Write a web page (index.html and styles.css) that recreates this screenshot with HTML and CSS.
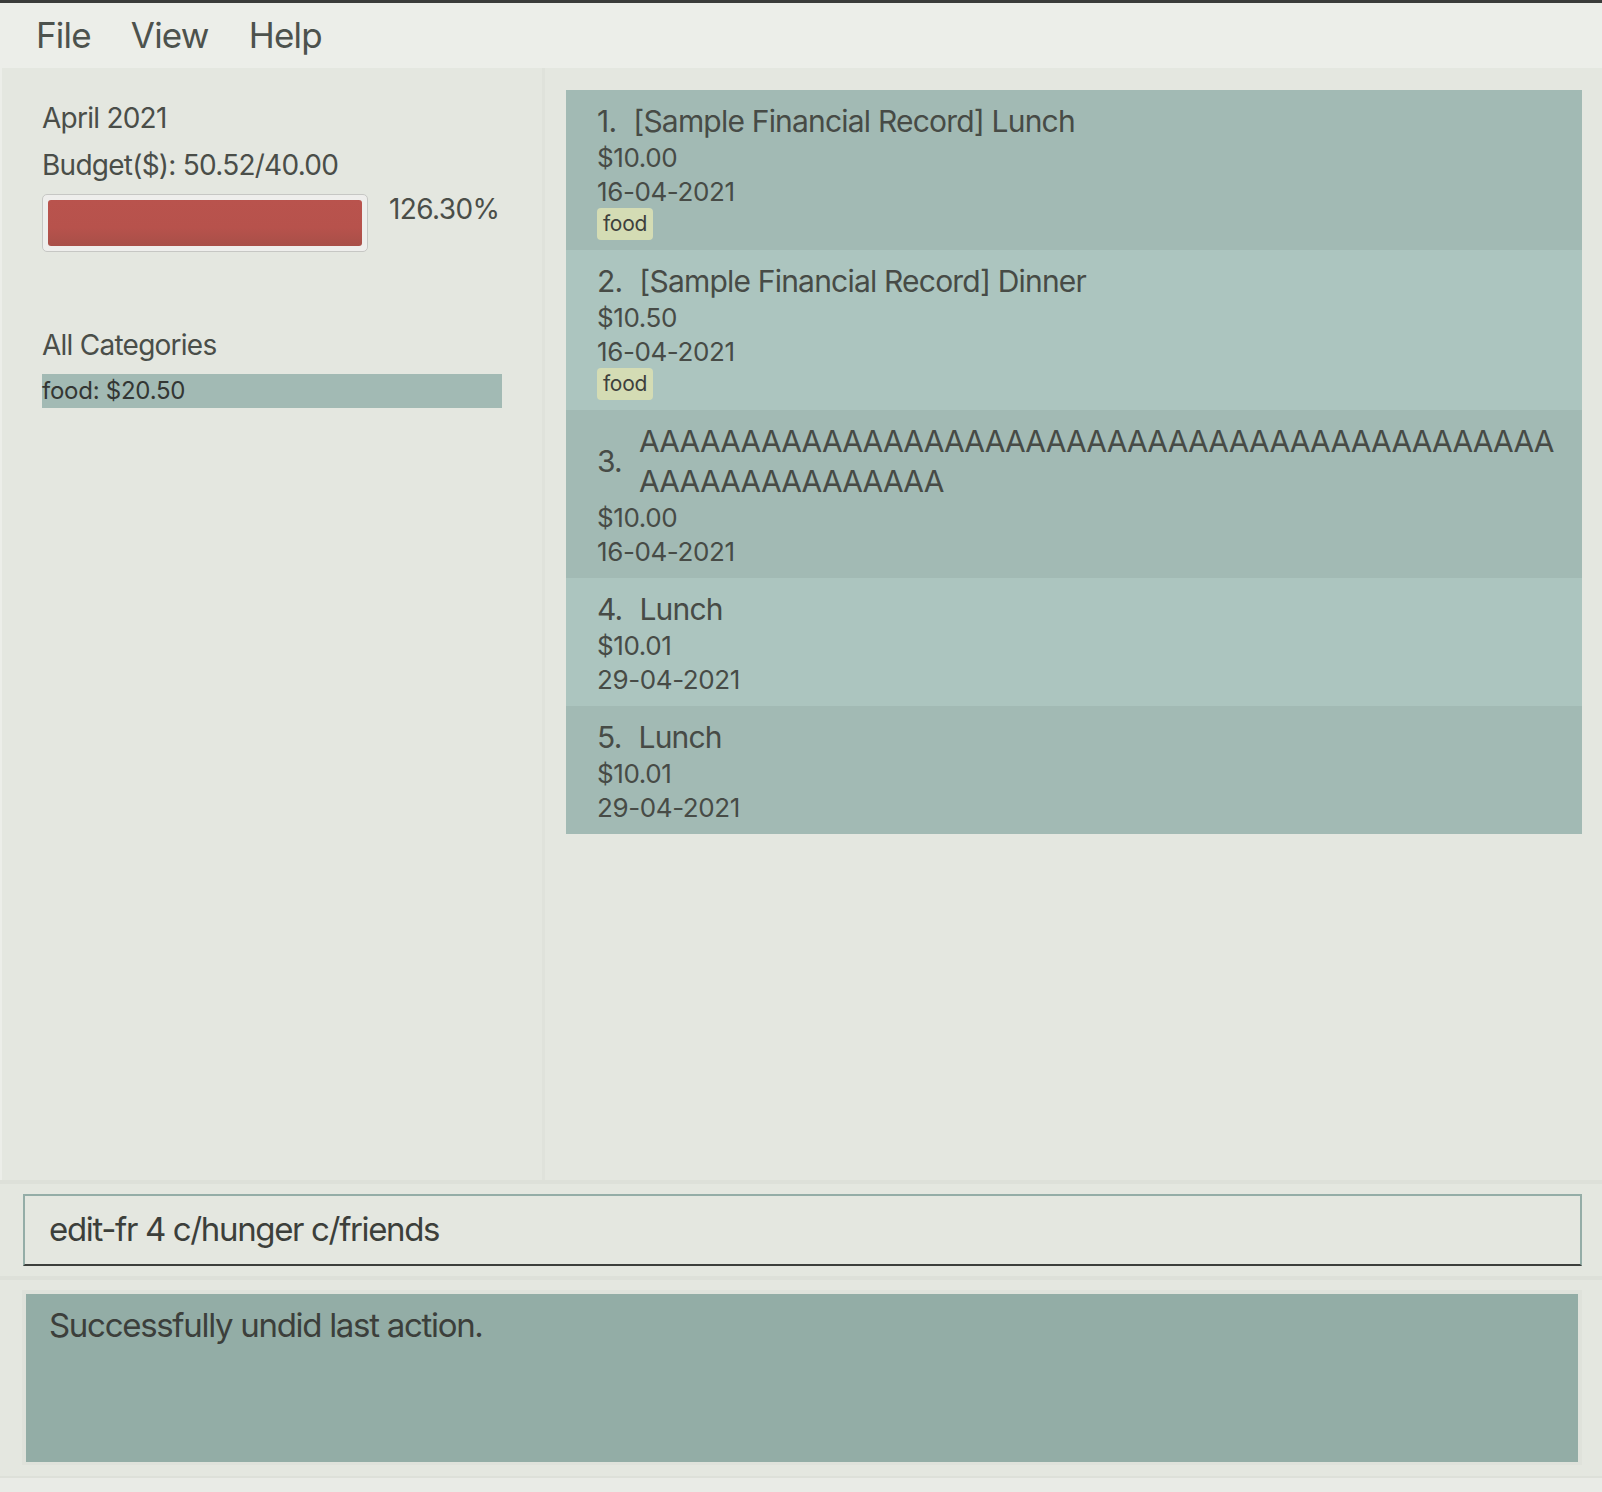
FILE: index.html
```html
<!DOCTYPE html>
<html>
<head>
<meta charset="utf-8">
<link rel="stylesheet" href="styles.css">
</head>
<body>
<div class="app">
  <div class="topline"></div>
  <nav class="menubar">
    <span class="menu-item">File</span>
    <span class="menu-item">View</span>
    <span class="menu-item">Help</span>
  </nav>
  <div class="split">
    <aside class="side">
      <div class="month">April 2021</div>
      <div class="budget">Budget($): 50.52/40.00</div>
      <div class="progress-row">
        <div class="progress"><div class="progress-fill"></div></div>
        <div class="percent">126.30%</div>
      </div>
      <div class="cat-title">All Categories</div>
      <div class="cat-item">food: $20.50</div>
    </aside>
    <div class="divider"></div>
    <main class="list">
      <div class="card odd">
        <div class="title"><span class="num">1.</span><span class="name">[Sample Financial Record] Lunch</span></div>
        <div class="line">$10.00</div>
        <div class="line">16-04-2021</div>
        <div class="tags"><span class="tag">food</span></div>
      </div>
      <div class="card even">
        <div class="title"><span class="num">2.</span><span class="name">[Sample Financial Record] Dinner</span></div>
        <div class="line">$10.50</div>
        <div class="line">16-04-2021</div>
        <div class="tags"><span class="tag">food</span></div>
      </div>
      <div class="card odd">
        <div class="title"><span class="num">3.</span><span class="name long">AAAAAAAAAAAAAAAAAAAAAAAAAAAAAAAAAAAAAAAAAAAAAAAAAAAAAAAAAAAA</span></div>
        <div class="line">$10.00</div>
        <div class="line">16-04-2021</div>
      </div>
      <div class="card even">
        <div class="title"><span class="num">4.</span><span class="name">Lunch</span></div>
        <div class="line">$10.01</div>
        <div class="line">29-04-2021</div>
      </div>
      <div class="card odd">
        <div class="title"><span class="num">5.</span><span class="name">Lunch</span></div>
        <div class="line">$10.01</div>
        <div class="line">29-04-2021</div>
      </div>
    </main>
  </div>
  <div class="sep"></div>
  <div class="cmd-area">
    <div class="cmd">edit-fr 4 c/hunger c/friends</div>
  </div>
  <div class="sep"></div>
  <div class="result-area">
    <div class="result-frame">
      <div class="result">Successfully undid last action.</div>
    </div>
  </div>
  <div class="sep thin"></div>
  <div class="status"></div>
</div>
</body>
</html>
```
FILE: styles.css
```css
* { box-sizing: border-box; }
html, body { margin: 0; padding: 0; }
body {
  width: 1602px;
  height: 1492px;
  overflow: hidden;
  background: #e4e7e0;
  font-family: "Inter", "Liberation Sans", sans-serif;
  color: #4a4e49;
}
.app {
  display: flex;
  flex-direction: column;
  height: 1492px;
}
.topline {
  height: 3px;
  background: #3a3c3a;
  flex: none;
}
.menubar {
  height: 65px;
  flex: none;
  background: #eceee9;
  display: flex;
  align-items: center;
  padding-left: 36px;
  padding-bottom: 1px;
  gap: 40px;
  font-size: 35px;
  letter-spacing: -0.8px;
  color: #4d524d;
}
.split {
  height: 1112px;
  flex: none;
  display: flex;
}
.side {
  width: 542px;
  flex: none;
  padding: 27px 40px 0 40px;
  border-left: 2px solid #eceee9;
  font-size: 28px;
  letter-spacing: -0.75px;
  overflow: hidden;
}
.month { line-height: 47px; }
.budget { line-height: 46px; }
.progress-row {
  display: flex;
  align-items: flex-start;
  margin-top: 6px;
  white-space: nowrap;
}
.progress {
  width: 326px;
  height: 58px;
  flex: none;
  border: 1px solid #c6c7c4;
  border-radius: 5px;
  background: #eeeeec;
  padding: 5px 5px;
}
.progress-fill {
  height: 100%;
  border-radius: 3px;
  background: linear-gradient(#b9534d, #b7524c 60%, #a84f48);
}
.percent {
  margin-left: 21px;
  line-height: 30px;
  letter-spacing: -0.6px;
}
.cat-title {
  margin-top: 76px;
  line-height: 34px;
}
.cat-item {
  margin-top: 12px;
  height: 34px;
  width: 460px;
  background: #a2bab4;
  font-size: 24px;
  letter-spacing: -0.25px;
  line-height: 34px;
  color: #333633;
}
.divider {
  width: 3px;
  flex: none;
  background: #dfe2db;
}
.list {
  flex: 1;
  padding: 22px 20px 0 21px;
}
.card {
  padding: 11px 20px 10px 31px;
  color: #474b46;
}
.card.odd { background: #a2bab4; }
.card.even { background: #acc5bf; }
.title {
  display: flex;
  align-items: center;
  font-size: 30px;
  line-height: 40px;
  letter-spacing: -0.8px;
}
.num {
  flex: none;
  margin-right: 17px;
}
.name {
  flex: 1;
  min-width: 0;
}
.name.long { word-break: break-all; }
.line {
  font-size: 26px;
  line-height: 33.5px;
  letter-spacing: -0.4px;
}
.tags { display: flex; height: 32px; }
.tag {
  background: #d4dcb4;
  border-radius: 4px;
  font-size: 21px;
  letter-spacing: -0.3px;
  line-height: 32px;
  padding: 0 6px 0 6px;
  color: #3d403c;
}
.sep {
  height: 4px;
  flex: none;
  background: #dde0d9;
}
.sep.thin { height: 2px; }
.cmd-area {
  height: 92px;
  flex: none;
  padding: 10px 20px 10px 23px;
}
.cmd {
  height: 72px;
  border: 2px solid #94ada7;
  border-bottom: 2px solid #3c3f3c;
  font-size: 33px;
  letter-spacing: -1.35px;
  line-height: 66px;
  padding-left: 24px;
  color: #3c3f3b;
}
.result-area {
  height: 196px;
  flex: none;
  padding: 10px 20px 11px 22px;
}
.result-frame {
  height: 175px;
  border: 4px solid #dfe2db;
  border-bottom-width: 3px;
}
.result {
  height: 100%;
  background: #93ada6;
  font-size: 33px;
  letter-spacing: -1.3px;
  padding: 11px 0 0 23px;
  line-height: 40px;
  color: #3c3f3b;
}
.status {
  flex: 1;
  background: #e9ebe6;
}
```
